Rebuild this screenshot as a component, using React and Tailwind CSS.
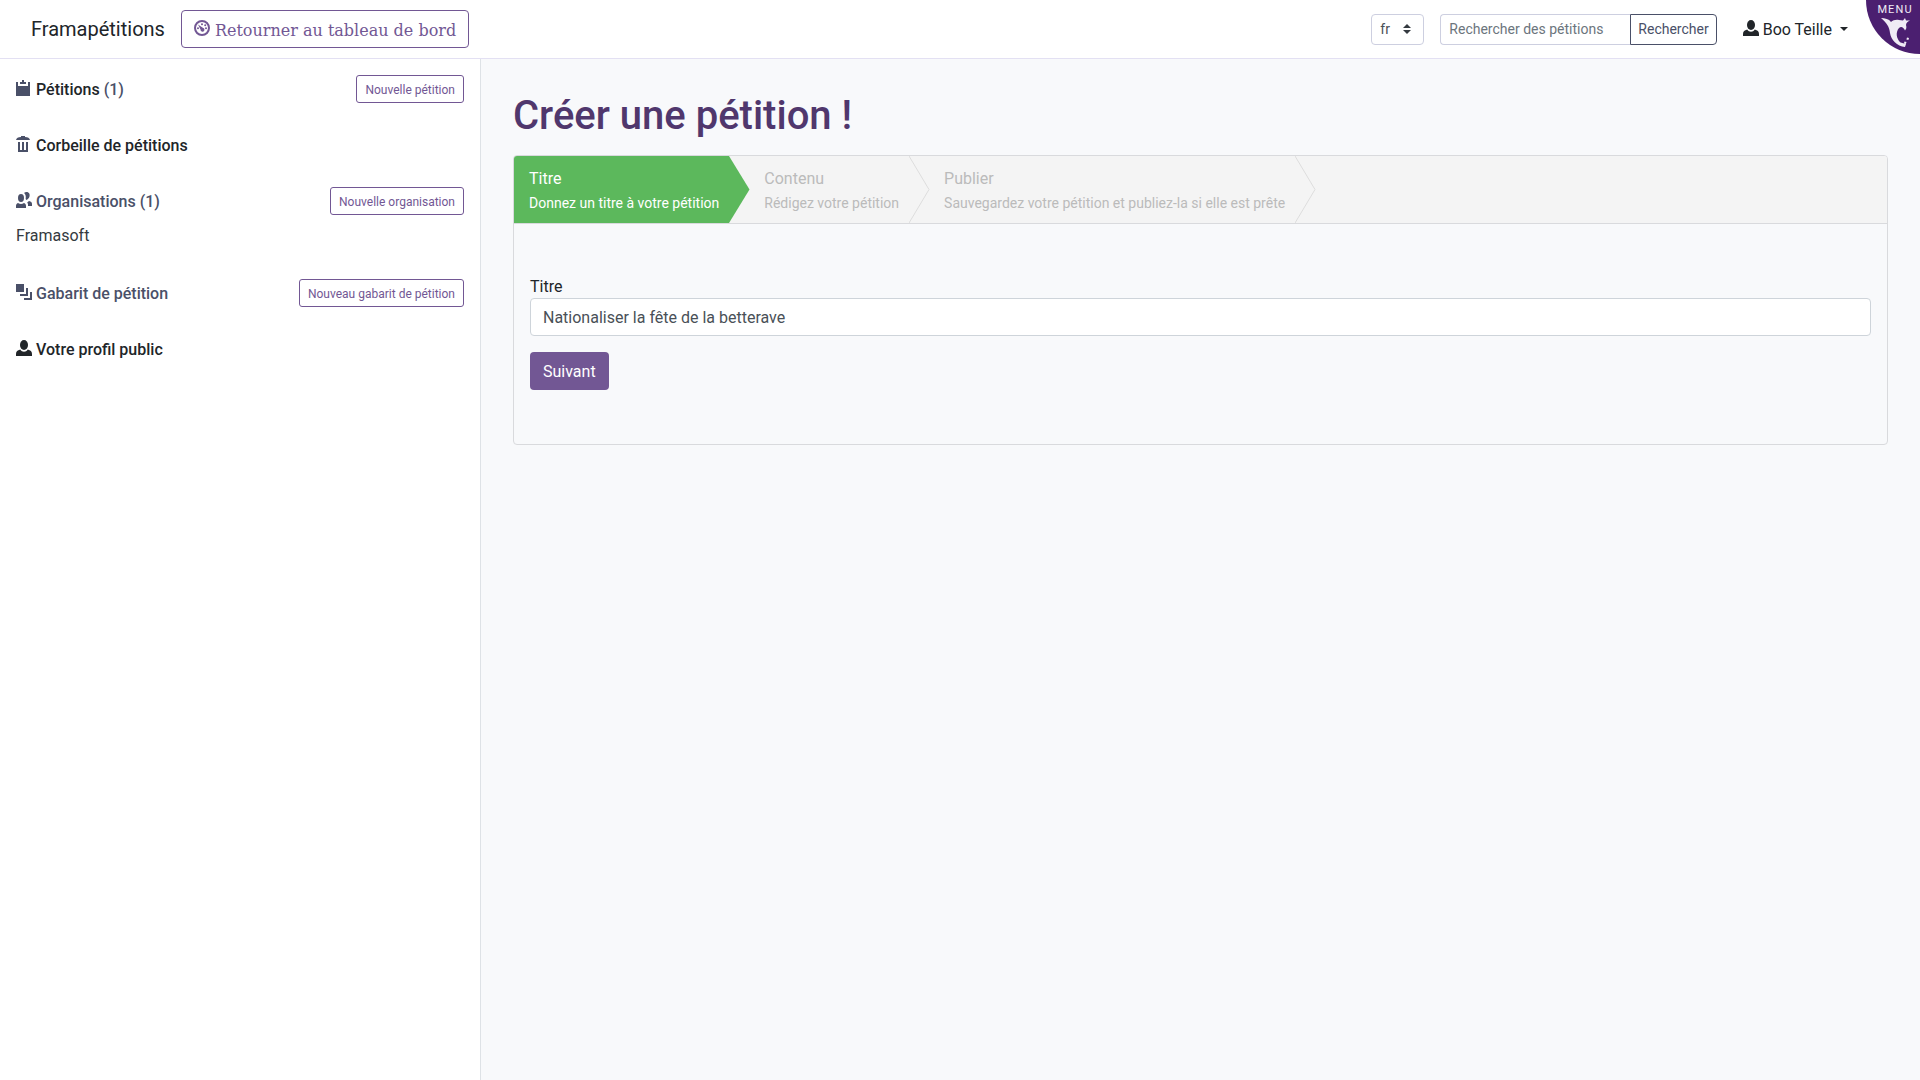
import {useState} from "react";

const UserIcon = () => (
    <svg className="h-4 w-4" viewBox="0 0 16 16" fill="currentColor" aria-hidden="true">
        <ellipse cx="8" cy="5" rx="4" ry="5" />
        <path d="M4.2 9.5C5.2 11 6.500 11.700 8 11.700s2.800-.7 3.800-2.200C14.500 10.300 16 11.500 16 14v2H0v-2c0-2.500 1.500-3.700 4.200-4.500z" />
    </svg>
);

const DashboardIcon = () => (
    <svg className="h-4 w-4" viewBox="0 0 16 16" fill="currentColor" aria-hidden="true">
        <circle cx="8" cy="8" r="7" fill="none" stroke="currentColor" strokeWidth="2" />
        <circle cx="8" cy="4.200" r="1" />
        <circle cx="11.200" cy="5.200" r="1" />
        <circle cx="12" cy="8.200" r="1" />
        <circle cx="4" cy="8.200" r="1" />
        <path d="M4 4.500l4.800 3.200a2 2 0 1 1-2.300 1.800z" />
    </svg>
);

const ClipboardIcon = () => (
    <svg className="h-4 w-4" viewBox="0 0 16 16" fill="currentColor" aria-hidden="true">
        <path d="M6 0h2v2h2v2H4V2h2z" />
        <path d="M0 2h2v4h10V2h2v14H0z" />
    </svg>
);

const TrashIcon = () => (
    <svg className="h-4 w-4" viewBox="0 0 16 16" fill="currentColor" aria-hidden="true">
        <path d="M5 0h4v1c3 0 4.500 1 5 3H0c.5-2 2-3 5-3z" />
        <path d="M2 6h2v8h2V6h2v8h2V6h2v10H2z" />
    </svg>
);

const PeopleIcon = () => (
    <svg className="h-4 w-4" viewBox="0 0 16 16" fill="currentColor" aria-hidden="true">
        <ellipse cx="5" cy="6" rx="3" ry="4" />
        <path d="M8 1c1.500-1.300 4.500-1.300 5.400.8.8 2.400-.4 5.200-2.700 6.200-.9-.3-1.200-.8-1-1.800C10 4 9.500 2.300 8 1z" />
        <path d="M2 11c2 1.400 4 1.400 6 0 1.500.5 2 1.500 2 3v2H0v-2c0-1.500.5-2.500 2-3z" />
        <path d="M13 9c2 .4 3 1.500 3 3v2h-4v-1.500c0-.8-.3-1.500-.8-2z" />
    </svg>
);

const LayersIcon = () => (
    <svg className="h-4 w-4" viewBox="0 0 16 16" fill="currentColor" aria-hidden="true">
        <path d="M0 0h8v8H0zM10 4h2v8H4v-2h6zM14 8h2v8H8v-2h6z" />
    </svg>
);

const DolphinIcon = () => (
    <svg className="mt-0.5 h-[29px] w-[29px]" viewBox="0 0 29 29" fill="currentColor" aria-hidden="true">
        <path d="M0 0C4 0 8 1 10 4c2-2 5-2.500 8-2l4 .5L24 0l1 2.500h4C27 3.500 25 4.500 25 7c.8 2.500.3 4-1 5.500C22.500 9 20 8 18 10c-3.500 4-3 10.500 1.500 14.500L25 26l-1 3C16 28 10 22 9 15 8.500 9 5.500 4.500 0 0z" />
        <path d="M26 19.500l2 .5-.6 2-2-.5zM23.500 23.500l2 .5-.6 2-2-.5z" />
    </svg>
);

const sections = [
    {label: "Pétitions", count: "(1)", icon: ClipboardIcon, dark: true, action: "Nouvelle pétition"},
    {label: "Corbeille de pétitions", icon: TrashIcon, dark: true},
    {label: "Organisations (1)", icon: PeopleIcon, action: "Nouvelle organisation", children: ["Framasoft"]},
    {label: "Gabarit de pétition", icon: LayersIcon, action: "Nouveau gabarit de pétition"},
    {label: "Votre profil public", icon: UserIcon, dark: true, darkIcon: true},
];

const steps = [
    {title: "Titre", description: "Donnez un titre à votre pétition"},
    {title: "Contenu", description: "Rédigez votre pétition"},
    {title: "Publier", description: "Sauvegardez votre pétition et publiez-la si elle est prête"},
];

const Navbar = () => {
    const [query, setQuery] = useState("");

    return (
        <header className="flex items-center justify-between border-b border-[#e3e0f3] bg-white py-2.5 pl-[31px]">
            <div className="flex items-center gap-4">
                <a href="#" className="text-xl">
                    Framapétitions
                </a>
                <a
                    href="#"
                    className="flex items-center gap-[5px] rounded border border-[#725794] px-3 pt-[7px] pb-[3px] font-['DejaVu_Serif',serif] text-base leading-[26px] text-[#725794]"
                >
                    <span className="pb-1.5">
                        <DashboardIcon />
                    </span>
                    Retourner au tableau de bord
                </a>
            </div>

            <div className="flex items-center pr-[72px]">
                <div className="relative mr-4">
                    <select
                        aria-label="Langue"
                        defaultValue="fr"
                        className="h-[31px] w-[53px] appearance-none rounded border border-[#cdcfe0] bg-white pl-2 text-sm text-[#495057]"
                    >
                        <option value="fr">fr</option>
                        <option value="en">en</option>
                    </select>
                    <svg
                        className="pointer-events-none absolute top-2.5 right-[13px] h-2.5 w-2"
                        viewBox="0 0 4 5"
                        fill="#343a40"
                        aria-hidden="true"
                    >
                        <path d="M2 0L0 2h4zm0 5L0 3h4z" />
                    </svg>
                </div>
                <form className="mr-[26px] flex" onSubmit={(e) => e.preventDefault()}>
                    <input
                        type="search"
                        aria-label="Rechercher des pétitions"
                        placeholder="Rechercher des pétitions"
                        value={query}
                        onChange={(e) => setQuery(e.target.value)}
                        className="h-[31px] w-[190px] rounded-l border border-r-0 border-[#cdcfe0] bg-white px-2 text-sm placeholder-[#6c757d]"
                    />
                    <button
                        type="submit"
                        className="h-[31px] rounded-r border border-[#4a5068] px-[7px] text-sm text-[#4a5068]"
                    >
                        Rechercher
                    </button>
                </form>
                <button type="button" className="flex items-center gap-1 pt-0.5 text-base">
                    <span className="pb-1">
                        <UserIcon />
                    </span>
                    Boo Teille
                    <svg className="mb-0.5 ml-1 h-1 w-2" viewBox="0 0 8 4" fill="currentColor" aria-hidden="true">
                        <path d="M0 0h8L4 4z" />
                    </svg>
                </button>
            </div>

            <a
                href="#"
                className="absolute top-0 right-0 flex h-[54px] w-[54px] flex-col items-center rounded-bl-full bg-[#4b1f70] pt-1 pl-1 text-[#f0ebf5]"
            >
                <span className="text-[11px] leading-3 tracking-widest">MENU</span>
                <DolphinIcon />
            </a>
        </header>
    );
};

const Sidebar = () => (
    <aside className="w-1/4 bg-white px-4 py-4">
        <nav className="flex flex-col gap-7">
            {sections.map(({label, count, icon: Icon, dark, darkIcon, action, children}) => (
                <div key={label}>
                    <div className="flex h-7 items-center justify-between">
                        <a
                            href="#"
                            className={`flex items-center gap-1 pt-0.5 font-medium ${dark ? "text-[#212529]" : "text-[#4a5068]"}`}
                        >
                            <span className={`pb-1 ${darkIcon ? "text-[#212529]" : "text-[#4a5068]"}`}>
                                <Icon />
                            </span>
                            {label}
                            {count && <span className="text-[#4a5068]">{count}</span>}
                        </a>
                        {action && (
                            <button
                                type="button"
                                className="h-7 rounded-[3px] border border-[#725794] px-2 pt-0.5 text-xs text-[#725794]"
                            >
                                {action}
                            </button>
                        )}
                    </div>
                    {children && (
                        <ul className="pt-[9px] pb-[3px]">
                            {children.map((name) => (
                                <li key={name}>
                                    <a href="#" className="text-[#343a40]">
                                        {name}
                                    </a>
                                </li>
                            ))}
                        </ul>
                    )}
                </div>
            ))}
        </nav>
    </aside>
);

const Stepper = ({current}) => (
    <ol className="flex overflow-hidden rounded-t-[3px] border-b border-[#d9dadd] bg-[#f4f4f4]">
        {steps.map(({title, description}, i) => (
            <li key={title} className={`flex ${i === current ? "text-white" : "text-[#bbbbbb]"}`}>
                <div className={`pt-[11px] pr-2.5 pb-2 pl-[15px] ${i === current ? "bg-[#5cb85c]" : ""}`}>
                    <div>{title}</div>
                    <div className="text-sm leading-6">{description}</div>
                </div>
                <svg className="-mr-px h-full w-[21px]" viewBox="0 0 21 67" preserveAspectRatio="none" aria-hidden="true">
                    {i === current ? (
                        <path d="M0 0l20.500 33.500L0 67z" fill="#5cb85c" />
                    ) : (
                        <path d="M0 0l20 33.500L0 67" fill="none" stroke="#dddddd" />
                    )}
                </svg>
            </li>
        ))}
    </ol>
);

const App = () => {
    const [title, setTitle] = useState("Nationaliser la fête de la betterave");

    return (
        <div className="relative flex min-h-screen flex-col bg-white font-[Roboto,sans-serif] text-base text-[#212529]">
            <Navbar />
            <div className="flex flex-1">
                <Sidebar />
                <main className="flex-1 border-l border-[#dee2e6] bg-[#f8f9fb] px-8 pt-[33px] pb-8">
                    <h1 className="text-[40px] leading-[48px] font-medium text-[#50376d]">Créer une pétition !</h1>
                    <section className="mt-[15px] rounded border border-[#d9dadd]">
                        <Stepper current={0} />
                        <form className="px-4 pt-[51px] pb-[54px]" onSubmit={(e) => e.preventDefault()}>
                            <label htmlFor="title" className="block leading-[23px]">
                                Titre
                            </label>
                            <input
                                type="text"
                                id="title"
                                value={title}
                                onChange={(e) => setTitle(e.target.value)}
                                className="block h-[38px] w-full rounded border border-[#ced4da] bg-white px-3 text-[#495057]"
                            />
                            <button
                                type="submit"
                                className="mt-4 h-[38px] rounded bg-[#725794] px-[13px] pt-0.5 text-white"
                            >
                                Suivant
                            </button>
                        </form>
                    </section>
                </main>
            </div>
        </div>
    );
};

export default App;
